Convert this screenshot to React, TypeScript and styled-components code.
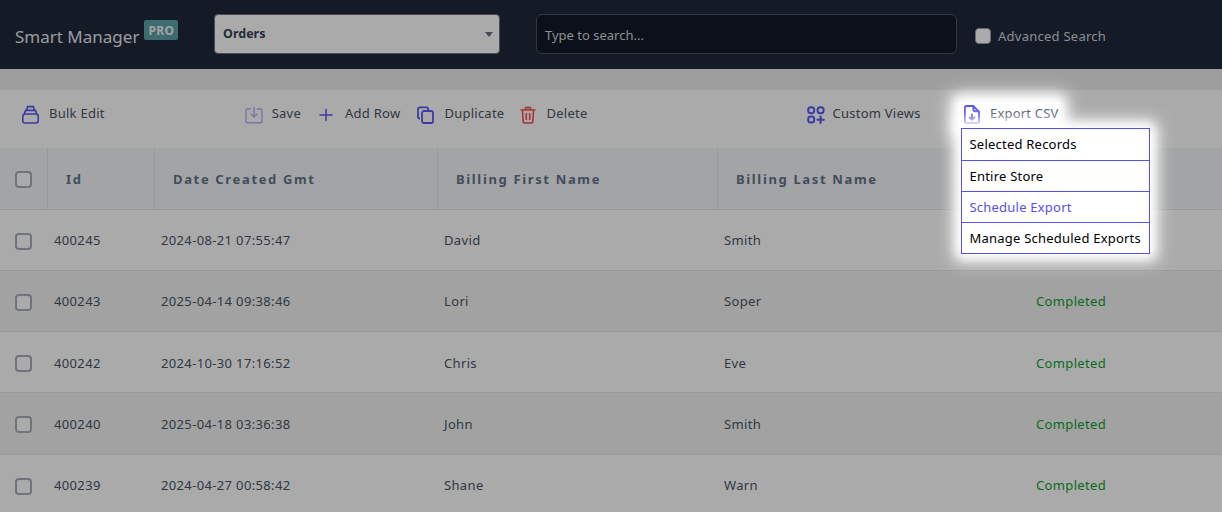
import React from 'react';
import styled, { createGlobalStyle } from 'styled-components';

const GlobalStyle = createGlobalStyle`
  html, body {
    margin: 0;
    padding: 0;
    height: 100%;
    overflow: hidden;
    background: #ededed;
    font-family: 'Noto Sans', 'Open Sans', sans-serif;
  }
`;

const Page = styled.div`
  width: 1222px;
  height: 512px;
  overflow: hidden;
  position: relative;
`;

const Overlay = styled.div`
  position: absolute;
  inset: 0;
  background: rgba(0, 0, 0, 0.333);
  z-index: 10;
`;

const Header = styled.header`
  display: flex;
  align-items: center;
  height: 69px;
  background: #1e293b;
  padding-left: 15px;
  box-sizing: border-box;
`;

const Brand = styled.div`
  display: flex;
  align-items: flex-start;
  width: 199px;
  color: #e5e7eb;
  font-size: 17px;
  line-height: 24px;
  margin-top: 4px;
`;

const ProBadge = styled.span`
  background: #5ba3a8;
  color: #f3f4f6;
  font-size: 12px;
  font-weight: 700;
  line-height: 21px;
  height: 20px;
  padding: 0 4px;
  margin: -5px 0 0 5px;
  border-radius: 2px;
  letter-spacing: 0.4px;
`;

const SelectBox = styled.div`
  display: flex;
  align-items: center;
  justify-content: space-between;
  width: 286px;
  height: 40px;
  margin-bottom: 1px;
  box-sizing: border-box;
  background: #ffffff;
  border: 1px solid #6b7280;
  border-radius: 4px;
  padding: 0 6px 2px 8px;
  color: #374151;
  font-size: 12.5px;
  font-weight: 700;
`;

const Caret = styled.span`
  width: 0;
  height: 0;
  border-left: 4px solid transparent;
  border-right: 4px solid transparent;
  border-top: 5px solid #6b7280;
  margin-top: 3px;
`;

const SearchBox = styled.div`
  display: flex;
  align-items: center;
  width: 421px;
  height: 40px;
  margin: 0 0 1px 36px;
  box-sizing: border-box;
  background: #111827;
  border: 1px solid #4b5563;
  border-radius: 6px;
  padding: 1px 0 0 8px;
  color: #d1d5db;
  font-size: 13px;
`;

const AdvancedSearch = styled.label`
  display: flex;
  align-items: center;
  gap: 7px;
  margin: 2px 0 0 18px;
  color: #d1d5db;
  font-size: 13px;
  letter-spacing: 0.25px;
`;

const DarkCheck = styled.span`
  width: 14px;
  height: 14px;
  background: #ffffff;
  border: 1px solid #9ca3af;
  border-radius: 4px;
`;

const Spacer = styled.div`
  height: 21px;
  background: #ededed;
`;

const Toolbar = styled.div`
  display: flex;
  align-items: center;
  height: 58px;
  background: #ffffff;
  padding: 0 0 12px 22px;
  box-sizing: border-box;
  position: relative;
`;

const ToolButton = styled.div<{ $gap?: number; $left?: number; $dim?: boolean }>`
  display: flex;
  align-items: center;
  gap: ${p => p.$gap ?? 9}px;
  margin-left: ${p => p.$left ?? 0}px;
  color: #4b5563;
  font-size: 13px;
  letter-spacing: 0.25px;
  svg {
    display: block;
    margin-top: 3px;
    opacity: ${p => (p.$dim ? 0.45 : 1)};
  }
`;

const ExportWrap = styled.div`
  position: absolute;
  left: 961px;
  top: 12px;
  z-index: 20;
`;

const ExportButton = styled.div`
  display: flex;
  align-items: center;
  gap: 10px;
  width: 100px;
  height: 26px;
  margin-left: -2px;
  box-sizing: border-box;
  padding: 0 0 4px 5px;
  background: #ffffff;
  box-shadow: 0 0 10px 4px #ffffff, 0 0 18px 8px #ffffff;
  color: #465063;
  font-size: 13px;
  letter-spacing: 0.2px;
  svg {
    display: block;
    margin-top: 2px;
  }
`;

const ExportMenu = styled.ul`
  list-style: none;
  margin: 0;
  padding: 0;
  width: 189px;
  box-sizing: border-box;
  background: #ffffff;
  border: 1px solid #5850ec;
  box-shadow: 0 0 10px 3px #ffffff, 0 0 16px 7px #ffffff;
  position: relative;
`;

const ExportItem = styled.li<{ $active?: boolean }>`
  height: 31px;
  line-height: 30px;
  box-sizing: border-box;
  padding-left: 7.5px;
  color: ${p => (p.$active ? '#5850ec' : '#000000')};
  font-size: 13px;
  letter-spacing: 0.22px;
  white-space: nowrap;
  & + & {
    border-top: 1px solid #5850ec;
  }
`;

const Row = styled.div<{ $head?: boolean; $even?: boolean }>`
  display: grid;
  grid-template-columns: 47px 107px 283px 280px 283px 1fr;
  height: ${p => (p.$head ? 61.5 : 61.25)}px;
  box-sizing: border-box;
  background: ${p => (p.$head ? '#f4f6fa' : p.$even ? '#f2f4f2' : '#ffffff')};
  border-bottom: 1px solid #e5e7eb;
`;

const HeadCell = styled.div`
  display: flex;
  align-items: center;
  padding: 1px 0 0 18px;
  color: #64748b;
  font-size: 13px;
  font-weight: 700;
  letter-spacing: 1.65px;
  border-left: 1px solid #e5e7eb;
  white-space: nowrap;
`;

const CheckCell = styled.div`
  display: flex;
  align-items: center;
  padding: 3px 0 0 15px;
`;

const Cell = styled.div<{ $done?: boolean; $pad?: number }>`
  display: flex;
  align-items: center;
  padding: 1px 0 0 ${p => p.$pad ?? 7}px;
  color: ${p => (p.$done ? '#10a030' : '#4b5563')};
  font-size: 13px;
  letter-spacing: 0.35px;
`;

const RowCheck = styled.span`
  width: 17px;
  height: 17px;
  box-sizing: border-box;
  background: #ffffff;
  border: 2px solid #a8aeb8;
  border-radius: 4px;
`;

const BulkIcon = () => (
  <svg width="17" height="19" viewBox="0 0 17 19" fill="none" stroke="#5e56f5" strokeWidth="1.6">
    <rect x="0.8" y="9" width="15.4" height="9" rx="2.4" />
    <path d="M2.2 9 3.6 5.4h9.8L14.8 9" />
    <path d="M4.8 5.2 5.6 1.6h5.8l.8 3.6" />
  </svg>
);

const SaveIcon = () => (
  <svg width="18" height="18" viewBox="0 0 18 18" fill="none" stroke="#5e56f5" strokeWidth="1.4" strokeLinecap="round" strokeLinejoin="round">
    <path d="M5.5 3H2.2A1.2 1.2 0 0 0 1 4.2v11.3a1.2 1.2 0 0 0 1.2 1.2h13.6a1.2 1.2 0 0 0 1.2-1.2V4.2A1.2 1.2 0 0 0 15.8 3h-3.3" />
    <path d="M9 1.5v9M6 8l3 3 3-3" />
  </svg>
);

const PlusIcon = () => (
  <svg width="16" height="16" viewBox="0 0 16 16" fill="none" stroke="#5e56f5" strokeWidth="1.5" strokeLinecap="round">
    <path d="M8 2.4v11.2M2 8h12" />
  </svg>
);

const DuplicateIcon = () => (
  <svg width="17" height="18" viewBox="0 0 17 18" fill="none" stroke="#5e56f5" strokeWidth="1.8" strokeLinejoin="round">
    <path d="M3 12.5H2.6A1.6 1.6 0 0 1 1 10.9V2.9a1.6 1.6 0 0 1 1.6-1.6h7a1.6 1.6 0 0 1 1.6 1.6v1" />
    <rect x="5" y="5" width="11" height="12" rx="2" />
  </svg>
);

const TrashIcon = () => (
  <svg width="16" height="18" viewBox="0 0 16 18" fill="none" stroke="#ff4d55" strokeWidth="1.6" strokeLinecap="round" strokeLinejoin="round">
    <path d="M1 4h14M5.5 4V1.6h5V4M2.5 4l.7 12a1 1 0 0 0 1 1h7.6a1 1 0 0 0 1-1l.7-12M6.3 7.5v6M9.7 7.5v6" />
  </svg>
);

const ViewsIcon = () => (
  <svg width="18" height="18" viewBox="0 0 18 18" fill="none" stroke="#5e56f5" strokeWidth="2" strokeLinecap="round">
    <rect x="1.2" y="1.2" width="6" height="6" rx="2.6" />
    <rect x="10.6" y="1.2" width="6" height="6" rx="2.6" />
    <rect x="1.2" y="10.6" width="6" height="6" rx="2.6" />
    <path d="M13.6 10.6v6.4M10.4 13.8h6.4" />
  </svg>
);

const ExportIcon = () => (
  <svg width="16" height="19" viewBox="0 0 16 19" fill="none" stroke="#5850ec" strokeWidth="1.9" strokeLinejoin="round" strokeLinecap="round">
    <path d="M2.6 1h6.6L15 6.6v9.6a1.8 1.8 0 0 1-1.8 1.8H2.6A1.8 1.8 0 0 1 .8 16.2V2.8A1.8 1.8 0 0 1 2.6 1Z" />
    <path d="M9.4 1.4v3.4a1.4 1.4 0 0 0 1.4 1.4h3.6" />
    <path d="M8 9.4v5.4M5.6 12.4 8 14.8l2.4-2.4" />
  </svg>
);

const orders = [
  { id: '400245', date: '2024-08-21 07:55:47', first: 'David', last: 'Smith', status: '' },
  { id: '400243', date: '2025-04-14 09:38:46', first: 'Lori', last: 'Soper', status: 'Completed' },
  { id: '400242', date: '2024-10-30 17:16:52', first: 'Chris', last: 'Eve', status: 'Completed' },
  { id: '400240', date: '2025-04-18 03:36:38', first: 'John', last: 'Smith', status: 'Completed' },
  { id: '400239', date: '2024-04-27 00:58:42', first: 'Shane', last: 'Warn', status: 'Completed' },
];

const exportOptions = ['Selected Records', 'Entire Store', 'Schedule Export', 'Manage Scheduled Exports'];

export default function App() {
  return (
    <Page>
      <GlobalStyle />
      <Header>
        <Brand>
          Smart Manager
          <ProBadge>PRO</ProBadge>
        </Brand>
        <SelectBox>
          Orders
          <Caret />
        </SelectBox>
        <SearchBox>Type to search...</SearchBox>
        <AdvancedSearch>
          <DarkCheck />
          Advanced Search
        </AdvancedSearch>
      </Header>
      <Spacer />
      <Toolbar>
        <ToolButton $gap={10}><BulkIcon />Bulk Edit</ToolButton>
        <ToolButton $left={140} $dim><SaveIcon />Save</ToolButton>
        <ToolButton $left={17} $gap={11}><PlusIcon />Add Row</ToolButton>
        <ToolButton $left={17} $gap={10}><DuplicateIcon />Duplicate</ToolButton>
        <ToolButton $left={16} $gap={10}><TrashIcon />Delete</ToolButton>
        <ToolButton $left={219} $gap={8}><ViewsIcon />Custom Views</ToolButton>
        <ExportWrap>
          <ExportButton><ExportIcon />Export CSV</ExportButton>
          <ExportMenu>
            {exportOptions.map((o, i) => (
              <ExportItem key={o} $active={i === 2}>{o}</ExportItem>
            ))}
          </ExportMenu>
        </ExportWrap>
      </Toolbar>
      <Row $head>
        <CheckCell><RowCheck /></CheckCell>
        <HeadCell>Id</HeadCell>
        <HeadCell>Date Created Gmt</HeadCell>
        <HeadCell>Billing First Name</HeadCell>
        <HeadCell>Billing Last Name</HeadCell>
        <HeadCell />
      </Row>
      {orders.map((o, i) => (
        <Row key={o.id} $even={i % 2 === 1}>
          <CheckCell><RowCheck /></CheckCell>
          <Cell>{o.id}</Cell>
          <Cell>{o.date}</Cell>
          <Cell>{o.first}</Cell>
          <Cell>{o.last}</Cell>
          <Cell $done $pad={36}>{o.status}</Cell>
        </Row>
      ))}
      <Overlay />
    </Page>
  );
}
